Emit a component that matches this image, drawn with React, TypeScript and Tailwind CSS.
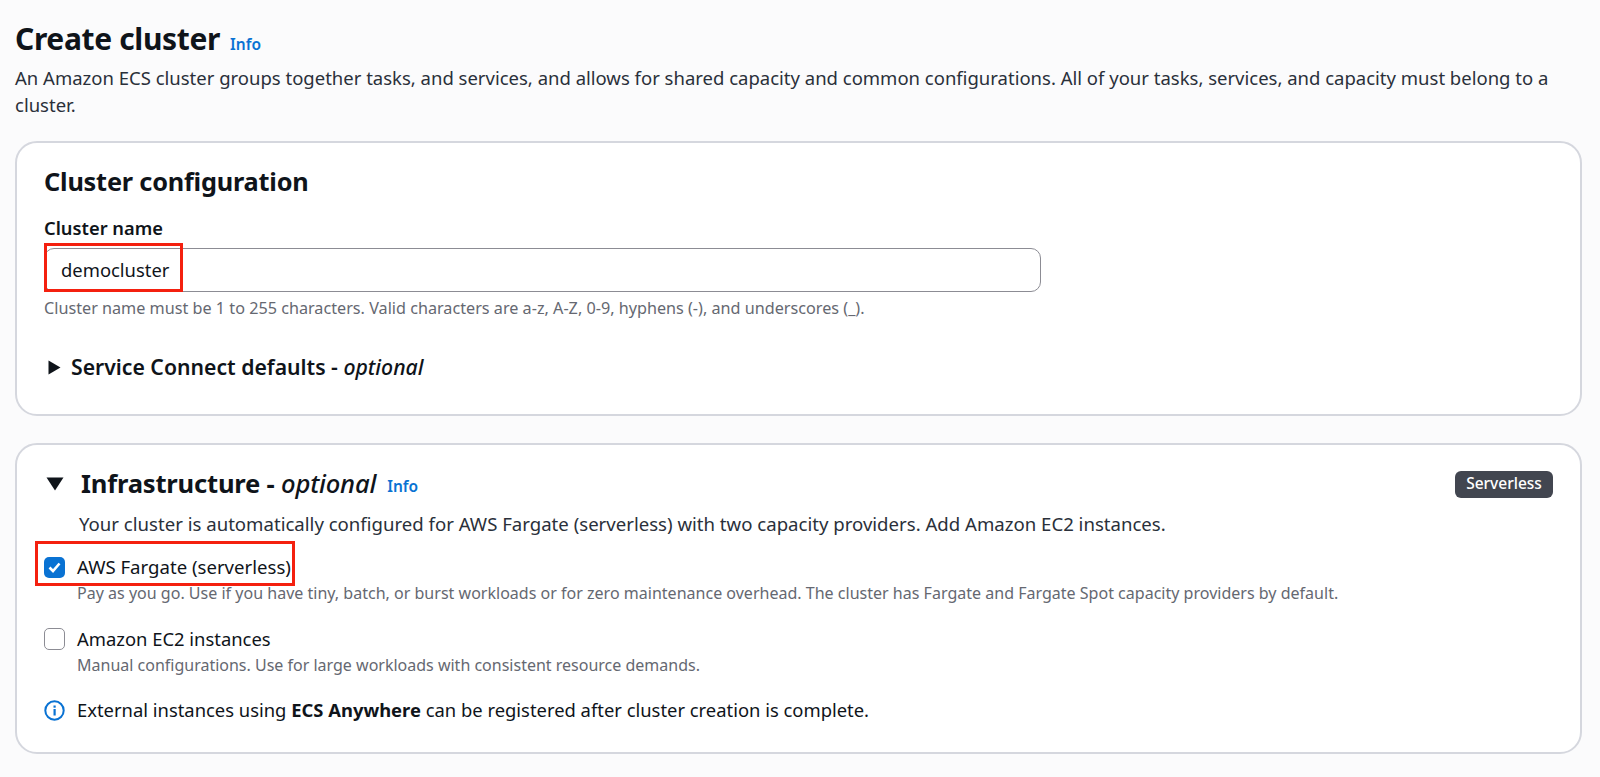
import React from "react";

const font = { fontFamily: '"Noto Sans", sans-serif' };

function Info({ className }: { className: string }) {
  return <span className={`font-semibold text-[15.5px] leading-none text-[#0972d3] ${className}`}>Info</span>;
}

export default function App() {
  return (
    <div className="h-[777px] w-[1600px] overflow-hidden bg-[#fbfbfc] text-[#0f141a] pl-[15px] pr-[18px] pt-[18px] font-['Noto_Sans',sans-serif]" style={font}>
      <div className="flex items-baseline gap-[10px]">
        <h1 className="text-[30px] leading-[42px] font-bold tracking-[-0.35px]">Create cluster</h1>
        <Info className="" />
      </div>
      <p className="mt-[4px] pr-[13px] text-[18.5px] leading-[27px] text-[#2a303a]">
        An Amazon ECS cluster groups together tasks, and services, and allows for shared capacity and common configurations. All of your tasks, services, and capacity must belong to a cluster.
      </p>

      <section className="mt-[23px] h-[275px] rounded-[22px] border-2 border-[#d5d7de] bg-white pl-[27px] pt-[21px]">
        <h2 className="text-[25.3px] leading-[34px] font-bold tracking-[-0.2px]">Cluster configuration</h2>
        <div className="mt-[18px] text-[18.3px] leading-[24px] font-semibold">Cluster name</div>
        <div className="relative mt-[8px] flex h-[44px] w-[997px] items-center rounded-[10px] border border-[#8c8c94] bg-white pl-[16px] text-[18.4px]">
          democluster
          <div className="absolute left-[-1px] top-[-6px] h-[49px] w-[139px] border-[3px] border-[#f4200f]" />
        </div>
        <p className="mt-[6px] text-[16.2px] leading-[20px] text-[#656871]">
          Cluster name must be 1 to 255 characters. Valid characters are a-z, A-Z, 0-9, hyphens (-), and underscores (_).
        </p>
        <div className="mt-[36px] flex items-center gap-[10px] text-[21.2px] leading-[26px] font-semibold">
          <svg width="13" height="15" viewBox="0 0 13 15" className="ml-[4px]"><path d="M0.5 0.5 L12.5 7.5 L0.5 14.5 Z" fill="#0f141a" /></svg>
          <span>Service Connect defaults - <em className="font-medium italic">optional</em></span>
        </div>
      </section>

      <section className="mt-[27px] h-[311px] rounded-[22px] border-2 border-[#d5d7de] bg-white pl-[27px] pr-[27px] pt-[22px]">
        <div className="flex items-center">
          <svg width="18" height="14" viewBox="0 0 18 14" className="ml-[2px]"><path d="M0.5 0.5 H17.5 L9 13.5 Z" fill="#0f141a" /></svg>
          <h2 className="ml-[17px] text-[25.6px] leading-[34px] font-bold tracking-[-0.2px]">
            Infrastructure - <em className="font-medium italic">optional</em>
          </h2>
          <Info className="ml-[11px] mt-[5px]" />
          <span className="ml-auto flex h-[27px] w-[98px] items-center justify-center rounded-[6px] bg-[#424650] text-[15.5px] font-medium text-white">Serverless</span>
        </div>
        <p className="mt-[11px] ml-[35px] text-[18.6px] leading-[24px] text-[#2a303a]">
          Your cluster is automatically configured for AWS Fargate (serverless) with two capacity providers. Add Amazon EC2 instances.
        </p>

        <div className="relative mt-[19px] flex h-[24px] items-center gap-[12px]">
          <div className="flex h-[21px] w-[21px] items-center justify-center rounded-[5px] bg-[#0972d3]">
            <svg width="13" height="11" viewBox="0 0 13 11" fill="none"><path d="M1.5 5.5 L5 9 L11.5 1.5" stroke="#fff" strokeWidth="2.6" /></svg>
          </div>
          <span className="text-[18.6px]">AWS Fargate (serverless)</span>
          <div className="absolute left-[-9px] top-[-14px] h-[45px] w-[260px] border-[3px] border-[#f4200f]" />
        </div>
        <p className="mt-[2px] ml-[33px] text-[16.05px] leading-[24px] text-[#656871]">
          Pay as you go. Use if you have tiny, batch, or burst workloads or for zero maintenance overhead. The cluster has Fargate and Fargate Spot capacity providers by default.
        </p>

        <div className="mt-[22px] flex h-[24px] items-center gap-[12px]">
          <div className="h-[22px] w-[21px] rounded-[5px] border border-[#8c8c94] bg-white" />
          <span className="text-[18.4px]">Amazon EC2 instances</span>
        </div>
        <p className="mt-[2px] ml-[33px] text-[16px] leading-[24px] text-[#656871]">
          Manual configurations. Use for large workloads with consistent resource demands.
        </p>

        <div className="mt-[21px] flex h-[24px] items-center gap-[12px]">
          <svg width="21" height="21" viewBox="0 0 21 21" fill="none">
            <circle cx="10.5" cy="10.5" r="9.2" stroke="#0972d3" strokeWidth="2" />
            <rect x="9.5" y="9" width="2.2" height="6.5" fill="#0972d3" />
            <rect x="9.5" y="5.5" width="2.2" height="2.2" fill="#0972d3" />
          </svg>
          <span className="text-[18.4px]">External instances using <b className="font-bold">ECS Anywhere</b> can be registered after cluster creation is complete.</span>
        </div>
      </section>
    </div>
  );
}
